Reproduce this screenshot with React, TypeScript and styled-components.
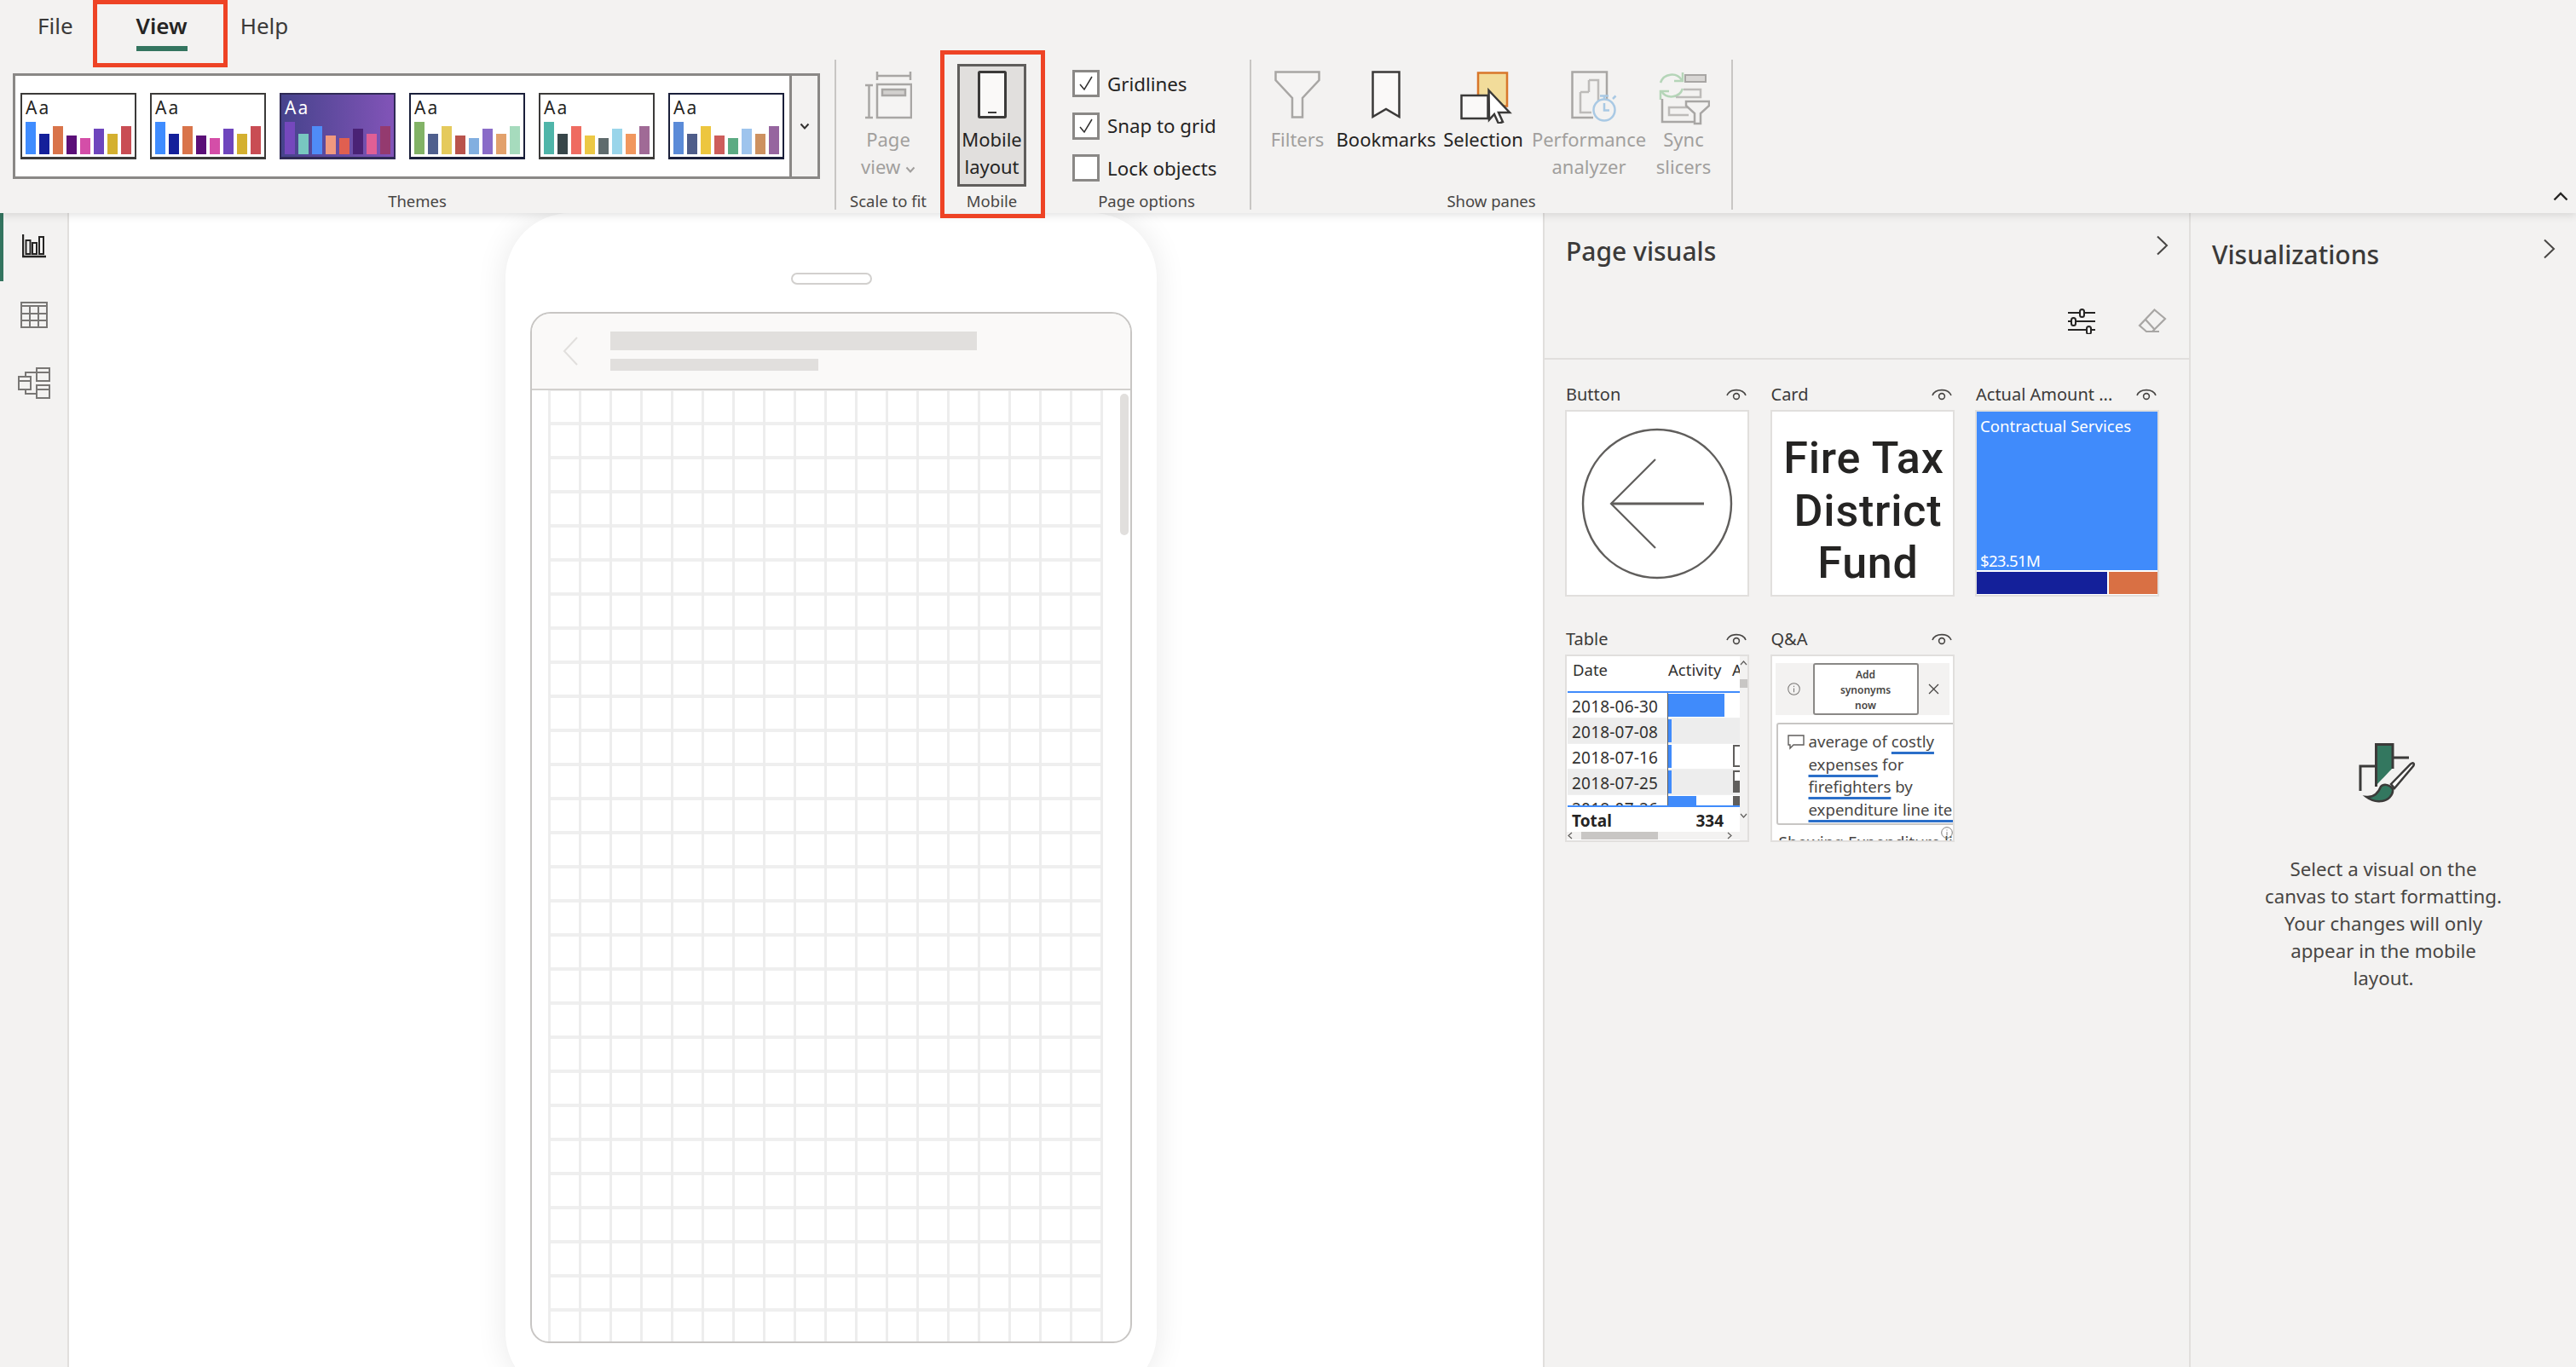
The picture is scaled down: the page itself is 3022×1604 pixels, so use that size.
import React from 'react';
import styled, { createGlobalStyle } from 'styled-components';

const GlobalStyle = createGlobalStyle`
  html, body {
    margin: 0;
    padding: 0;
    width: 3022px;
    height: 1604px;
    overflow: hidden;
    background: #f3f2f1;
    font-family: "Noto Sans", "Open Sans", sans-serif;
    color: #323130;
  }
  * { box-sizing: border-box; }
`;

// Page frame
const Page = styled.div`
  width: 3022px;
  height: 1604px;
  display: flex;
  flex-direction: column;
  overflow: hidden;
`;

const Ribbon = styled.header`
  position: relative;
  z-index: 3;
  height: 250px;
  flex-shrink: 0;
  background: #f3f2f1;
  box-shadow: 0 2px 10px rgba(0, 0, 0, 0.13);
`;

const TabRow = styled.nav`
  height: 70px;
  display: flex;
  align-items: flex-start;
  padding: 10px 0 0 44px;
`;

const Tab = styled.div<{ $active?: boolean; $gap?: number }>`
  position: relative;
  margin-left: ${({ $gap }) => $gap ?? 0}px;
  font-size: 26px;
  line-height: 40px;
  font-weight: ${({ $active }) => ($active ? 600 : 400)};
  color: ${({ $active }) => ($active ? '#252423' : '#3b3a39')};
  &::after {
    content: '';
    display: ${({ $active }) => ($active ? 'block' : 'none')};
    height: 6px;
    margin-top: 4px;
    background: #33745f;
  }
`;

const RedBox = styled.div`
  position: absolute;
  border: 5px solid #ee4325;
  pointer-events: none;
`;

const ViewHighlight = styled(RedBox)`
  left: 109px;
  top: 0;
  width: 158px;
  height: 79px;
`;

const MobileHighlight = styled(RedBox)`
  left: 1103px;
  top: 59px;
  width: 123px;
  height: 197px;
`;

const RibbonBody = styled.div`
  height: 176px;
  display: flex;
`;

const Group = styled.section<{ $width: number; $sep?: boolean }>`
  width: ${({ $width }) => $width}px;
  flex-shrink: 0;
  display: flex;
  flex-direction: column;
  border-right: ${({ $sep }) => ($sep ? '2px solid #c8c6c4' : 'none')};
`;

const GroupContent = styled.div<{ $pad?: number }>`
  flex: 1;
  display: flex;
  align-items: flex-start;
  padding-left: ${({ $pad }) => $pad ?? 0}px;
`;

const GroupLabel = styled.div`
  height: 16px;
  margin-bottom: 2px;
  line-height: 16px;
  font-size: 18.5px;
  text-align: center;
  color: #484644;
  white-space: nowrap;
`;

const Gallery = styled.div`
  width: 947px;
  height: 124px;
  margin: 16px 0 0 15px;
  display: flex;
  border: 3px solid #8a8886;
  background: #fff;
`;

const ThumbRow = styled.div`
  flex: 1;
  display: flex;
  align-items: center;
  gap: 16px;
  padding-left: 6px;
`;

const GalleryArrow = styled.div`
  width: 33px;
  display: flex;
  align-items: center;
  justify-content: center;
  background: #f3f2f1;
  border-left: 3px solid #8a8886;
`;

const Thumb = styled.div<{ $dark?: boolean; $edge: string }>`
  width: 136px;
  height: 78px;
  padding: 5px 0 0 4px;
  border: 2px solid ${({ $edge }) => $edge};
  border-bottom-width: 3px;
  background: ${({ $dark }) => ($dark ? 'linear-gradient(90deg, #46438c, #8254b8)' : '#fff')};
`;

const ThumbText = styled.div<{ $dark?: boolean }>`
  height: 27px;
  line-height: 20px;
  font-size: 21px;
  letter-spacing: 2px;
  color: ${({ $dark }) => ($dark ? '#fff' : '#252423')};
`;

const ThumbBars = styled.div`
  height: 38px;
  display: flex;
  align-items: flex-end;
  gap: 4px;
`;

const ThumbBar = styled.div<{ $h: number; $c: string }>`
  width: 12px;
  height: ${({ $h }) => $h}px;
  background: ${({ $c }) => $c};
`;

const LargeButton = styled.div<{ $width: number; $selected?: boolean; $disabled?: boolean }>`
  width: ${({ $width }) => $width}px;
  height: 144px;
  margin-top: 5px;
  padding-top: ${({ $selected }) => ($selected ? 5 : 8)}px;
  flex-shrink: 0;
  display: flex;
  flex-direction: column;
  align-items: center;
  background: ${({ $selected }) => ($selected ? '#e1dfdd' : 'transparent')};
  border: ${({ $selected }) => ($selected ? '3px solid #605e5c' : 'none')};
  color: ${({ $disabled }) => ($disabled ? '#a19f9d' : '#252423')};
`;

const IconSlot = styled.div<{ $nudge?: number }>`
  height: 56px;
  display: flex;
  align-items: flex-start;
  justify-content: center;
  padding-left: ${({ $nudge }) => $nudge ?? 0}px;
`;

const LargeText = styled.div`
  margin-top: 8px;
  font-size: 22px;
  line-height: 32px;
  text-align: center;
  white-space: nowrap;
`;

const CheckColumn = styled.div`
  display: flex;
  flex-direction: column;
  gap: 17.5px;
  padding-top: 12px;
`;

const CheckRow = styled.label`
  display: flex;
  align-items: center;
  gap: 9px;
  height: 32px;
  font-size: 22.3px;
  color: #252423;
`;

const CheckBox = styled.span`
  width: 32px;
  height: 32px;
  display: flex;
  align-items: center;
  justify-content: center;
  border: 3px solid #8a8886;
  background: #fff;
`;

const Collapse = styled.div`
  position: absolute;
  right: 9px;
  bottom: 14px;
  display: flex;
`;

const Main = styled.main`
  flex: 1;
  min-height: 0;
  display: flex;
`;

const Rail = styled.aside`
  width: 81px;
  flex-shrink: 0;
  border-right: 2px solid #e1dfdd;
  background: #f3f2f1;
`;

const RailItem = styled.div<{ $active?: boolean }>`
  height: 80px;
  display: flex;
  align-items: center;
  justify-content: center;
  border-left: 4px solid ${({ $active }) => ($active ? '#33745f' : 'transparent')};
  padding: 0 4px 2px 0;
`;

const Canvas = styled.div`
  width: 1729px;
  flex-shrink: 0;
  background: #fff;
  padding-left: 512px;
`;

const Phone = styled.div`
  width: 764px;
  height: 1390px;
  padding: 70px 29px 0;
  background: #fff;
  border-radius: 76px;
  box-shadow: 0 0 36px rgba(0, 0, 0, 0.09);
`;

const Notch = styled.div`
  width: 95px;
  height: 14px;
  margin: 0 auto 32px;
  border: 2px solid #d2d0ce;
  border-radius: 7px;
`;

const Screen = styled.div`
  height: 1210px;
  display: flex;
  flex-direction: column;
  overflow: hidden;
  border: 2px solid #c8c6c4;
  border-radius: 24px 24px 22px 22px;
`;

const ScreenHeader = styled.div`
  height: 90px;
  flex-shrink: 0;
  display: flex;
  align-items: center;
  gap: 38px;
  padding-left: 36px;
  background: #faf9f8;
  border-bottom: 2px solid #d2d0ce;
`;

const HeaderLines = styled.div`
  display: flex;
  flex-direction: column;
  gap: 10px;
`;

const SkeletonLine = styled.div<{ $w: number; $h: number }>`
  width: ${({ $w }) => $w}px;
  height: ${({ $h }) => $h}px;
  background: #e1dfdd;
`;

const ScreenBody = styled.div`
  position: relative;
  flex: 1;
  padding-left: 19px;
`;

const Grid = styled.div`
  width: 651px;
  height: 100%;
  background-image:
    linear-gradient(to right, #ededed 3px, transparent 3px),
    linear-gradient(to bottom, #efefef 4px, transparent 4px);
  background-size: 36px 40px;
  background-position: 0 37px;
`;

const ScreenScroll = styled.div`
  position: absolute;
  right: 2px;
  top: 4px;
  width: 10px;
  height: 166px;
  border-radius: 5px;
  background: #e1dfdd;
`;

const VisualsPane = styled.section`
  width: 760px;
  flex-shrink: 0;
  border-left: 2px solid #e1dfdd;
  border-right: 2px solid #e1dfdd;
  background: #f3f2f1;
`;

const PaneHeader = styled.div`
  height: 90px;
  display: flex;
  justify-content: space-between;
  align-items: flex-start;
  padding: 26px 24px 0 25px;
`;

const PaneTitle = styled.h2`
  margin: 0;
  font-size: 30px;
  line-height: 38px;
  font-weight: 500;
  color: #3b3a39;
`;

const Tools = styled.div`
  height: 82px;
  display: flex;
  justify-content: flex-end;
  gap: 48px;
  padding: 22px 26px 0 0;
  border-bottom: 2px solid #e1dfdd;
`;

const VisualGrid = styled.div`
  display: grid;
  grid-template-columns: repeat(3, 216px);
  column-gap: 24.5px;
  row-gap: 37px;
  padding: 28px 0 0 24px;
`;

const VisualCard = styled.div``;

const VisualLabel = styled.div`
  height: 25px;
  margin-bottom: 6px;
  display: flex;
  align-items: center;
  justify-content: space-between;
  padding: 0 3px 0 1px;
  font-size: 20px;
  color: #3b3a39;
  white-space: nowrap;
`;

const VisualBox = styled.div<{ $h: number }>`
  position: relative;
  width: 216px;
  height: ${({ $h }) => $h}px;
  display: flex;
  overflow: hidden;
  border: 2px solid #e1dfdd;
  background: #fff;
`;

const ButtonArt = styled.div`
  flex: 1;
  display: flex;
  align-items: center;
  justify-content: center;
`;

const CardText = styled.div`
  flex: 1;
  padding: 24px 0 0 4px;
  font-family: Roboto, "Noto Sans", sans-serif;
  font-size: 52px;
  line-height: 61.5px;
  font-weight: 500;
  letter-spacing: 0.8px;
  text-align: center;
  color: #252423;
`;

const CardLine = styled.div<{ $indent?: boolean }>`
  padding-left: ${({ $indent }) => ($indent ? 10 : 0)}px;
`;

const Treemap = styled.div`
  flex: 1;
  display: flex;
  flex-direction: column;
  gap: 2px;
`;

const TreemapMain = styled.div`
  height: 186px;
  display: flex;
  flex-direction: column;
  justify-content: space-between;
  padding: 6px 0 0 4px;
  background: #408bfb;
  color: #fff;
  font-size: 18.6px;
  line-height: 22px;
`;

const TreemapValue = styled.span`
  letter-spacing: -0.7px;
`;

const TreemapRow = styled.div`
  height: 26px;
  display: flex;
  gap: 2px;
`;

const TreemapCell = styled.div<{ $w?: number; $c: string }>`
  flex: ${({ $w }) => ($w ? `0 0 ${$w}px` : '1')};
  background: ${({ $c }) => $c};
`;

const TableMain = styled.div`
  width: 203px;
  display: flex;
  flex-direction: column;
`;

const TableHead = styled.div`
  height: 43px;
  flex-shrink: 0;
  display: grid;
  grid-template-columns: 112px 75px 16px;
  padding: 4px 0 0 6px;
  border-bottom: 2px solid #408bfb;
  margin-left: 1px;
  font-size: 18.5px;
  line-height: 24px;
  color: #323130;
  overflow: hidden;
  white-space: nowrap;
`;

const TableRows = styled.div`
  height: 134px;
  flex-shrink: 0;
  overflow: hidden;
  margin-left: 1px;
  border-bottom: 2px solid #408bfb;
`;

const TableRow = styled.div<{ $alt?: boolean }>`
  height: 30px;
  display: grid;
  grid-template-columns: 118px 76px 8px;
  background: ${({ $alt }) => ($alt ? '#ededed' : '#fff')};
  border-bottom: 1px solid #f0f0f0;
`;

const DateCell = styled.div`
  padding-left: 5px;
  font-size: 19px;
  line-height: 32px;
  letter-spacing: 0.2px;
  color: #323130;
  border-right: 1px solid #605e5c;
`;

const BarCell = styled.div`
  padding-top: 1px;
`;

const DataBar = styled.div`
  height: 27px;
  background: #408bfb;
`;

const MiniCell = styled.div<{ $kind?: 'outline' | 'half' | 'full' }>`
  height: 26px;
  margin-top: 1px;
  border: ${({ $kind }) => ($kind ? '2px solid #605e5c' : 'none')};
  border-right: none;
  background: ${({ $kind }) =>
    $kind === 'half'
      ? 'linear-gradient(to bottom, #fff 45%, #605e5c 45%)'
      : $kind === 'full'
        ? '#605e5c'
        : 'transparent'};
`;

const TotalRow = styled.div`
  height: 29px;
  flex-shrink: 0;
  display: flex;
  justify-content: space-between;
  padding: 0 19px 0 6px;
  font-size: 19px;
  line-height: 32px;
  font-weight: 700;
  color: #252423;
`;

const HScroll = styled.div`
  height: 9px;
  flex-shrink: 0;
  display: flex;
  align-items: center;
  background: #f3f2f1;
`;

const HThumb = styled.div`
  width: 90px;
  height: 9px;
  margin: 0 12px 0 9px;
  background: #c8c6c4;
`;

const HArrowEnd = styled.svg`
  margin-left: 68px;
`;

const VScroll = styled.div`
  width: 9px;
  display: flex;
  flex-direction: column;
  align-items: center;
  background: #f3f2f1;
`;

const VThumb = styled.div`
  width: 9px;
  height: 10px;
  margin: 13px 0 0;
  background: #c8c6c4;
`;

const VArrowEnd = styled.svg`
  margin-top: 143px;
`;

const QnaColumn = styled.div`
  flex: 1;
  min-width: 0;
  padding: 8px 0 0 4px;
`;

const QnaStrip = styled.div`
  width: 204px;
  height: 61px;
  display: flex;
  align-items: center;
  background: #f3f2f1;
`;

const QnaInfo = styled.div`
  width: 44px;
  display: flex;
  justify-content: center;
`;

const SynonymButton = styled.div`
  width: 124px;
  height: 61px;
  padding-top: 3px;
  border: 2px solid #8a8886;
  border-radius: 3px;
  background: #fff;
  font-size: 12px;
  line-height: 18px;
  font-weight: 600;
  text-align: center;
  color: #484644;
`;

const QnaClose = styled.div`
  flex: 1;
  display: flex;
  justify-content: center;
`;

const QnaInput = styled.div`
  position: relative;
  width: 230px;
  height: 120px;
  margin: 9px 0 0 1px;
  padding: 7px 0 0 36px;
  border: 2px solid #c8c6c4;
  border-radius: 3px;
  background: #fff;
  font-size: 18.6px;
  line-height: 26.5px;
  color: #484644;
  white-space: nowrap;
`;

const ChatIcon = styled.div`
  position: absolute;
  left: 11px;
  top: 12px;
  display: flex;
`;

const Term = styled.span`
  text-decoration: underline;
  text-decoration-color: #2b6fc9;
  text-decoration-thickness: 3px;
  text-underline-offset: 5px;
  text-decoration-skip-ink: none;
`;

const QnaResult = styled.div`
  margin: 9px 0 0 4px;
  font-size: 19px;
  line-height: 24px;
  color: #484644;
  white-space: nowrap;
`;

const ResultInfo = styled.div`
  position: absolute;
  right: 0;
  bottom: 2px;
  display: flex;
`;

const VizPane = styled.section`
  flex: 1;
  min-width: 0;
  background: #f3f2f1;
`;

const VizHeader = styled.div`
  display: flex;
  justify-content: space-between;
  align-items: flex-start;
  padding: 30px 24px 0 25px;
`;

const EmptyState = styled.div`
  margin-top: 539px;
  display: flex;
  flex-direction: column;
  align-items: center;
  padding-left: 0;
`;

const EmptyText = styled.p`
  margin: 47px 0 0;
  font-size: 22.3px;
  line-height: 32px;
  text-align: center;
  color: #484644;
`;

// Drawings
const gray = '#a8a6a4';

const Chevron = ({ color = '#484644' }: { color?: string }) => (
  <svg width="15" height="24" viewBox="0 0 15 24" fill="none">
    <path d="M2 1.5 L13 12 L2 22.5" stroke={color} strokeWidth="2" />
  </svg>
);

const SmallDown = ({ color = '#323130' }: { color?: string }) => (
  <svg width="12" height="9" viewBox="0 0 12 9" fill="none">
    <path d="M1.5 1.5 L6 6.5 L10.5 1.5" stroke={color} strokeWidth="2" />
  </svg>
);

const PageViewIcon = () => (
  <svg width="56" height="58" viewBox="0 0 56 58" fill="none" stroke={gray} strokeWidth="2.5">
    <path d="M15 1 V11 M15 6 H54 M54 1 V11" />
    <path d="M1 17 H10 M5.5 17 V55 M1 55 H10" />
    <rect x="15" y="16" width="40" height="39" fill="#f5f4f3" />
    <rect x="21" y="22" width="27" height="7" fill="#d2d0ce" />
  </svg>
);

const PhoneIcon = () => (
  <svg width="34" height="56" viewBox="0 0 34 56" fill="none">
    <rect x="1.5" y="1.5" width="31" height="53" rx="1" fill="#faf9f8" stroke="#3b3a39" strokeWidth="3" />
    <path d="M12 49 H22" stroke="#3b3a39" strokeWidth="2" />
  </svg>
);

const FunnelIcon = () => (
  <svg width="54" height="56" viewBox="0 0 54 56" fill="#f5f4f3" stroke={gray} strokeWidth="2.5">
    <path d="M1.5 1.5 H52.5 V11 L33 32 V54.5 H21 V32 L1.5 11 Z" />
  </svg>
);

const BookmarkIcon = () => (
  <svg width="34" height="56" viewBox="0 0 34 56" fill="#faf9f8" stroke="#3b3a39" strokeWidth="2.5">
    <path d="M1.5 1.5 H32.5 V54 L17 45 L1.5 54 Z" />
  </svg>
);

const SelectionIcon = () => (
  <svg width="62" height="62" viewBox="0 0 62 62">
    <rect x="21" y="2.5" width="34" height="39" fill="#f2dc9a" stroke="#d8762a" strokeWidth="2.5" />
    <rect x="1.5" y="29" width="31" height="27" fill="#faf9f8" stroke="#3b3a39" strokeWidth="2.5" />
    <path
      d="M33.5 23 L58 49 H45 L50 60 L45 62 L40 51 L34 57.5 Z"
      fill="#fff"
      stroke="#3b3a39"
      strokeWidth="2.5"
      strokeLinejoin="miter"
    />
  </svg>
);

const PerformanceIcon = () => (
  <svg width="56" height="60" viewBox="0 0 56 60" fill="none">
    <path d="M42 36 V1.5 H1.5 V55 H26" stroke={gray} strokeWidth="2.5" />
    <path d="M21 11 H32 V36 M21 11 V25 M11 25 H21 M11 25 V49 H24" stroke="#bdbbb9" strokeWidth="2.5" />
    <circle cx="39" cy="46" r="12.5" fill="#f3f2f1" stroke="#a9c9e4" strokeWidth="2.5" />
    <path d="M39 38 V46.5 H45 M34 29.5 H44 M39 30 V33 M49 33 L52.5 29.5" stroke="#a9c9e4" strokeWidth="2.5" />
  </svg>
);

const SyncIcon = () => (
  <svg width="62" height="64" viewBox="0 0 62 64" fill="none">
    <path d="M4 14 A14 14 0 0 1 29 11 M30 21 A14 14 0 0 1 5 24" stroke="#b5d5b8" strokeWidth="2.5" />
    <path d="M20 12 H30 V2 M4 34 V24 H14" stroke="#b5d5b8" strokeWidth="2.5" />
    <rect x="33" y="5" width="24" height="8" fill="#d8d6d4" stroke={gray} strokeWidth="2" />
    <path d="M31 22 H51 V31 H22" stroke="#bdbbb9" strokeWidth="2.5" />
    <path d="M6 33 V60 H44" stroke={gray} strokeWidth="2.5" />
    <path d="M40 43 H14 V52 H37" stroke="#bdbbb9" strokeWidth="2.5" />
    <path d="M34 36 H61 V41 L51 50 V62 H44 V50 L34 41 Z" fill="#f3f2f1" stroke={gray} strokeWidth="2.5" />
  </svg>
);

const ReportIcon = () => (
  <svg width="28" height="28" viewBox="0 0 28 28" fill="none" stroke="#252423">
    <path d="M1 0 V26 H28" strokeWidth="2.4" />
    <rect x="4.5" y="7" width="5" height="16" strokeWidth="2" />
    <rect x="12" y="10" width="5" height="13" strokeWidth="2" />
    <rect x="20" y="3" width="5" height="20" strokeWidth="2" />
  </svg>
);

const DataIcon = () => (
  <svg width="32" height="31" viewBox="0 0 32 31" fill="none" stroke="#797775" strokeWidth="2">
    <rect x="1" y="1" width="30" height="29" />
    <path d="M1 5 H31 M1 14 H31 M1 22 H31 M11 5 V30 M21 5 V30" />
  </svg>
);

const ModelIcon = () => (
  <svg width="38" height="37" viewBox="0 0 38 37" fill="none" stroke="#797775" strokeWidth="2">
    <rect x="22" y="1" width="15" height="15" />
    <path d="M22 6 H37" />
    <rect x="22" y="21" width="15" height="15" />
    <path d="M22 26 H37" />
    <rect x="1" y="11" width="14" height="15" />
    <path d="M1 16 H15 M9 11 V6 H22 M9 26 V31 H22" />
  </svg>
);

const SlidersIcon = () => (
  <svg width="34" height="30" viewBox="0 0 34 30" fill="none">
    <path d="M0 5 H32 M0 15 H32 M0 25 H32" stroke="#252423" strokeWidth="2" />
    <rect x="14" y="1" width="5" height="9" rx="2.5" fill="#f3f2f1" stroke="#252423" strokeWidth="2" />
    <rect x="4" y="11" width="5" height="9" rx="2.5" fill="#f3f2f1" stroke="#252423" strokeWidth="2" />
    <rect x="22" y="21" width="5" height="9" rx="2.5" fill="#f3f2f1" stroke="#252423" strokeWidth="2" />
  </svg>
);

const EraserIcon = () => (
  <svg width="34" height="30" viewBox="0 0 34 30" fill="none" stroke={gray} strokeWidth="2.2">
    <path d="M19.5 1.5 L32 12 L17 27 H10 L2 20 Z" />
    <path d="M9 13 L20 25 M10 27 H25" />
  </svg>
);

const EyeIcon = () => (
  <svg width="24" height="15" viewBox="0 0 24 15" fill="none" stroke="#484644" strokeWidth="1.6">
    <path d="M1 9 A11.5 9 0 0 1 23 9" />
    <circle cx="12" cy="10" r="3.4" />
  </svg>
);

const ArrowCircle = () => (
  <svg width="178" height="178" viewBox="0 0 178 178" fill="none" stroke="#605e5c">
    <circle cx="89" cy="89" r="87" strokeWidth="2.4" />
    <path d="M144 89 H35" strokeWidth="3" />
    <path d="M87 37 L35 89 L87 141" strokeWidth="2.2" />
  </svg>
);

const InfoIcon = ({ size = 15 }: { size?: number }) => (
  <svg width={size} height={size} viewBox="0 0 16 16" fill="none" stroke="#797775" strokeWidth="1.1">
    <circle cx="8" cy="8" r="7.2" />
    <path d="M8 7 V12 M8 4 V5.2" />
  </svg>
);

const CloseIcon = () => (
  <svg width="13" height="13" viewBox="0 0 13 13" fill="none" stroke="#484644" strokeWidth="1.3">
    <path d="M1 1 L12 12 M12 1 L1 12" />
  </svg>
);

const ChatGlyph = () => (
  <svg width="20" height="18" viewBox="0 0 20 18" fill="none" stroke="#605e5c" strokeWidth="1.4">
    <path d="M1 1 H19 V12 H7 L3 16 V12 H1 Z" />
  </svg>
);

const BrushIcon = () => (
  <svg width="110" height="100" viewBox="0 0 110 100" fill="none">
    <path d="M47 64 V17 H66 V44 Z" fill="#33775f" />
    <path d="M46.5 66 V16.5 H66 V45 M66 32 H85 M46 42 H28 V71" stroke="#3b3a39" strokeWidth="3" />
    <path d="M64 63 L87 39.5 C90 37 92 39 90 42 L68 68 Z" fill="#faf9f8" stroke="#3b3a39" strokeWidth="2.5" />
    <path
      d="M35 78 C45 79 50 71 52 66 C56 62 63 64 66 69 C67 76 60 83 52 83 C45 84 39 81 35 78 Z"
      fill="#33775f"
      stroke="#3b3a39"
      strokeWidth="2.5"
    />
  </svg>
);

// Data
const barHeights = [38, 24, 33, 22, 19, 30, 24, 33];

const themes = [
  { edge: '#3b3a39', colors: ['#3f8cff', '#14209a', '#d9744a', '#5b0f78', '#d44ea8', '#6e45bd', '#d4b02f', '#c94d54'] },
  { edge: '#3b3a39', colors: ['#3f8cff', '#14209a', '#d9744a', '#5b0f78', '#d44ea8', '#6e45bd', '#d4b02f', '#c94d54'] },
  { edge: '#2f2a55', dark: true, colors: ['#7548bd', '#78c7c0', '#4f8cf8', '#f0997f', '#e05f50', '#4a2275', '#e05f95', '#943a6f'] },
  { edge: '#1a1f3a', colors: ['#82b366', '#4f5f8e', '#e5ca5c', '#b9534c', '#82afe0', '#8a6cc8', '#e2a16c', '#a6dbbd'] },
  { edge: '#3b3a39', colors: ['#4fb5a9', '#374649', '#ef6c61', '#ecc845', '#5f6b6d', '#9ad5ea', '#f1975e', '#a06a96'] },
  { edge: '#1a1f3a', colors: ['#5b8bd8', '#4e5d8a', '#edc63f', '#cd5d5b', '#5cab83', '#9ec4ed', '#cd9160', '#96659f'] },
];

const tableRows: { date: string; bar: number; mini?: 'outline' | 'half' | 'full' }[] = [
  { date: '2018-06-30', bar: 66 },
  { date: '2018-07-08', bar: 4 },
  { date: '2018-07-16', bar: 4, mini: 'outline' },
  { date: '2018-07-25', bar: 4, mini: 'half' },
  { date: '2018-07-26', bar: 33, mini: 'full' },
];

const Check = () => (
  <svg width="20" height="20" viewBox="0 0 20 20" fill="none" stroke="#323130" strokeWidth="1.5">
    <path d="M3 11 L8 17 L17 2" />
  </svg>
);

const App = () => (
  <Page>
    <GlobalStyle />
    <Ribbon>
      <TabRow>
        <Tab>File</Tab>
        <Tab $active $gap={74}>View</Tab>
        <Tab $gap={62}>Help</Tab>
      </TabRow>
      <RibbonBody>
        <Group $width={981} $sep>
          <GroupContent>
            <Gallery>
              <ThumbRow>
                {themes.map((theme, index) => (
                  <Thumb key={index} $dark={theme.dark} $edge={theme.edge}>
                    <ThumbText $dark={theme.dark}>Aa</ThumbText>
                    <ThumbBars>
                      {theme.colors.map((color, i) => (
                        <ThumbBar key={i} $h={barHeights[i]} $c={color} />
                      ))}
                    </ThumbBars>
                  </Thumb>
                ))}
              </ThumbRow>
              <GalleryArrow>
                <SmallDown />
              </GalleryArrow>
            </Gallery>
          </GroupContent>
          <GroupLabel>Themes</GroupLabel>
        </Group>
        <Group $width={122}>
          <GroupContent $pad={20}>
            <LargeButton $width={82} $disabled>
              <IconSlot>
                <PageViewIcon />
              </IconSlot>
              <LargeText>
                Page
                <br />
                view <SmallDown color="#a19f9d" />
              </LargeText>
            </LargeButton>
          </GroupContent>
          <GroupLabel>Scale to fit</GroupLabel>
        </Group>
        <Group $width={121}>
          <GroupContent $pad={20}>
            <LargeButton $width={81} $selected>
              <IconSlot>
                <PhoneIcon />
              </IconSlot>
              <LargeText>
                Mobile
                <br />
                layout
              </LargeText>
            </LargeButton>
          </GroupContent>
          <GroupLabel>Mobile</GroupLabel>
        </Group>
        <Group $width={244} $sep>
          <GroupContent $pad={34}>
            <CheckColumn>
              <CheckRow>
                <CheckBox>
                  <Check />
                </CheckBox>
                Gridlines
              </CheckRow>
              <CheckRow>
                <CheckBox>
                  <Check />
                </CheckBox>
                Snap to grid
              </CheckRow>
              <CheckRow>
                <CheckBox />
                Lock objects
              </CheckRow>
            </CheckColumn>
          </GroupContent>
          <GroupLabel>Page options</GroupLabel>
        </Group>
        <Group $width={565} $sep>
          <GroupContent $pad={10}>
            <LargeButton $width={88} $disabled>
              <IconSlot>
                <FunnelIcon />
              </IconSlot>
              <LargeText>Filters</LargeText>
            </LargeButton>
            <LargeButton $width={120}>
              <IconSlot>
                <BookmarkIcon />
              </IconSlot>
              <LargeText>Bookmarks</LargeText>
            </LargeButton>
            <LargeButton $width={108}>
              <IconSlot $nudge={8}>
                <SelectionIcon />
              </IconSlot>
              <LargeText>Selection</LargeText>
            </LargeButton>
            <LargeButton $width={140} $disabled>
              <IconSlot $nudge={14}>
                <PerformanceIcon />
              </IconSlot>
              <LargeText>
                Performance
                <br />
                analyzer
              </LargeText>
            </LargeButton>
            <LargeButton $width={82} $disabled>
              <IconSlot>
                <SyncIcon />
              </IconSlot>
              <LargeText>
                Sync
                <br />
                slicers
              </LargeText>
            </LargeButton>
          </GroupContent>
          <GroupLabel>Show panes</GroupLabel>
        </Group>
      </RibbonBody>
      <Collapse>
        <svg width="18" height="11" viewBox="0 0 18 11" fill="none">
          <path d="M1.5 9.5 L9 2 L16.5 9.5" stroke="#252423" strokeWidth="2.4" />
        </svg>
      </Collapse>
      <ViewHighlight />
      <MobileHighlight />
    </Ribbon>
    <Main>
      <Rail>
        <RailItem $active>
          <ReportIcon />
        </RailItem>
        <RailItem>
          <DataIcon />
        </RailItem>
        <RailItem>
          <ModelIcon />
        </RailItem>
      </Rail>
      <Canvas>
        <Phone>
          <Notch />
          <Screen>
            <ScreenHeader>
              <svg width="18" height="34" viewBox="0 0 18 34" fill="none">
                <path d="M17 1 L2 17 L17 33" stroke="#e1dfdd" strokeWidth="2" />
              </svg>
              <HeaderLines>
                <SkeletonLine $w={430} $h={22} />
                <SkeletonLine $w={244} $h={14} />
              </HeaderLines>
            </ScreenHeader>
            <ScreenBody>
              <Grid />
              <ScreenScroll />
            </ScreenBody>
          </Screen>
        </Phone>
      </Canvas>
      <VisualsPane>
        <PaneHeader>
          <PaneTitle>Page visuals</PaneTitle>
          <Chevron />
        </PaneHeader>
        <Tools>
          <SlidersIcon />
          <EraserIcon />
        </Tools>
        <VisualGrid>
          <VisualCard>
            <VisualLabel>
              Button
              <EyeIcon />
            </VisualLabel>
            <VisualBox $h={219}>
              <ButtonArt>
                <ArrowCircle />
              </ButtonArt>
            </VisualBox>
          </VisualCard>
          <VisualCard>
            <VisualLabel>
              Card
              <EyeIcon />
            </VisualLabel>
            <VisualBox $h={219}>
              <CardText>
                <CardLine>Fire Tax</CardLine>
                <CardLine $indent>District</CardLine>
                <CardLine $indent>Fund</CardLine>
              </CardText>
            </VisualBox>
          </VisualCard>
          <VisualCard>
            <VisualLabel>
              Actual Amount ...
              <EyeIcon />
            </VisualLabel>
            <VisualBox $h={219}>
              <Treemap>
                <TreemapMain>
                  <span>Contractual Services</span>
                  <TreemapValue>$23.51M</TreemapValue>
                </TreemapMain>
                <TreemapRow>
                  <TreemapCell $w={153} $c="#14209a" />
                  <TreemapCell $c="#d97044" />
                </TreemapRow>
              </Treemap>
            </VisualBox>
          </VisualCard>
          <VisualCard>
            <VisualLabel>
              Table
              <EyeIcon />
            </VisualLabel>
            <VisualBox $h={220}>
              <TableMain>
                <TableHead>
                  <span>Date</span>
                  <span>Activity</span>
                  <span>A</span>
                </TableHead>
                <TableRows>
                  {tableRows.map((row, index) => (
                    <TableRow key={row.date} $alt={index % 2 === 1}>
                      <DateCell>{row.date}</DateCell>
                      <BarCell>
                        <DataBar style={{ width: row.bar }} />
                      </BarCell>
                      <MiniCell $kind={row.mini} />
                    </TableRow>
                  ))}
                </TableRows>
                <TotalRow>
                  <span>Total</span>
                  <span>334</span>
                </TotalRow>
                <HScroll>
                  <svg width="8" height="9" viewBox="0 0 8 9" fill="none" stroke="#605e5c" strokeWidth="1.2">
                    <path d="M6 1 L2 4.5 L6 8" />
                  </svg>
                  <HThumb />
                  <HArrowEnd width="8" height="9" viewBox="0 0 8 9" fill="none" stroke="#605e5c" strokeWidth="1.2">
                    <path d="M2 1 L6 4.5 L2 8" />
                  </HArrowEnd>
                </HScroll>
              </TableMain>
              <VScroll>
                <svg width="9" height="14" viewBox="0 0 9 14" fill="none" stroke="#605e5c" strokeWidth="1.2">
                  <path d="M1 10 L4.5 6 L8 10" />
                </svg>
                <VThumb />
                <VArrowEnd width="9" height="14" viewBox="0 0 9 14" fill="none" stroke="#605e5c" strokeWidth="1.2">
                  <path d="M1 5 L4.5 9 L8 5" />
                </VArrowEnd>
              </VScroll>
            </VisualBox>
          </VisualCard>
          <VisualCard>
            <VisualLabel>
              Q&amp;A
              <EyeIcon />
            </VisualLabel>
            <VisualBox $h={220}>
              <QnaColumn>
                <QnaStrip>
                  <QnaInfo>
                    <InfoIcon />
                  </QnaInfo>
                  <SynonymButton>
                    Add
                    <br />
                    synonyms
                    <br />
                    now
                  </SynonymButton>
                  <QnaClose>
                    <CloseIcon />
                  </QnaClose>
                </QnaStrip>
                <QnaInput>
                  <ChatIcon>
                    <ChatGlyph />
                  </ChatIcon>
                  <div>
                    average of <Term>costly</Term>
                  </div>
                  <div>
                    <Term>expenses</Term> for
                  </div>
                  <div>
                    <Term>firefighters</Term> by
                  </div>
                  <div>
                    <Term>expenditure line items</Term>
                  </div>
                </QnaInput>
                <QnaResult>Showing Expenditure line items</QnaResult>
              </QnaColumn>
              <ResultInfo>
                <InfoIcon size={14} />
              </ResultInfo>
            </VisualBox>
          </VisualCard>
        </VisualGrid>
      </VisualsPane>
      <VizPane>
        <VizHeader>
          <PaneTitle>Visualizations</PaneTitle>
          <Chevron />
        </VizHeader>
        <EmptyState>
          <BrushIcon />
          <EmptyText>
            Select a visual on the
            <br />
            canvas to start formatting.
            <br />
            Your changes will only
            <br />
            appear in the mobile
            <br />
            layout.
          </EmptyText>
        </EmptyState>
      </VizPane>
    </Main>
  </Page>
);

export default App;
